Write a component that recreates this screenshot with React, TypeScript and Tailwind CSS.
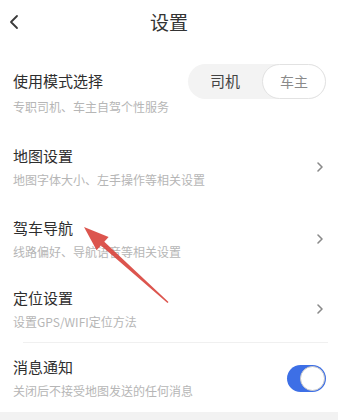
import React from 'react';

const font = { fontFamily: '"Noto Sans CJK SC", "Noto Sans", sans-serif' };

function Chevron() {
    return (
        <svg className="w-[8px] h-[12px] text-[#8a8a8a] mr-[2px]" viewBox="0 0 8 12" fill="none" stroke="currentColor">
            <path d="M2 2l4 4-4 4" strokeWidth={1.6} strokeLinecap="round" strokeLinejoin="round" />
        </svg>
    );
}

interface RowProps {
    title: string;
    desc: string;
    height: string;
    gap?: string;
    right?: React.ReactNode;
}

function Row({ title, desc, height, gap = 'gap-[6px]', right }: RowProps) {
    return (
        <div className={`flex items-center justify-between pl-[13px] pr-[12px] ${height}`}>
            <div className={`flex flex-col ${gap}`}>
                <div className="text-[15px] leading-[20px] text-[#2e2e2e]">{title}</div>
                <div className="text-[12px] leading-[16px] text-[#b6b6b6]">{desc}</div>
            </div>
            {right}
        </div>
    );
}

export default function App() {
    return (
        <div className="relative w-[338px] h-[420px] bg-white overflow-hidden" style={font}>
            {/* Header */}
            <div className="relative h-[44px] flex items-center justify-center">
                <svg className="absolute left-[8px] top-[14px] w-[12px] h-[16px] text-[#3a3a3a]" viewBox="0 0 12 16" fill="none" stroke="currentColor">
                    <path d="M9 2L3 8l6 6" strokeWidth={1.8} strokeLinecap="round" strokeLinejoin="round" />
                </svg>
                <div className="text-[19px] text-[#333]">设置</div>
            </div>

            <div className="mt-[11px]">
                <Row
                    title="使用模式选择"
                    desc="专职司机、车主自驾个性服务"
                    height="h-[75px]"
                    gap="gap-[8px]"
                    right={
                        <div className="flex items-center h-[35px] w-[138px] rounded-full bg-[#f3f3f3] -mt-[22px]">
                            <div className="flex-1 text-center text-[15px] text-[#444]">司机</div>
                            <div className="w-[64px] h-[35px] rounded-full bg-white border border-[#e2e2e2] flex items-center justify-center text-[14px] text-[#8a8a8a]">
                                车主
                            </div>
                        </div>
                    }
                />
                <Row title="地图设置" desc="地图字体大小、左手操作等相关设置" height="h-[73px]" right={<Chevron />} />
                <Row title="驾车导航" desc="线路偏好、导航语音等相关设置" height="h-[72px]" right={<Chevron />} />
                <Row title="定位设置" desc="设置GPS/WIFI定位方法" height="h-[67px]" right={<Chevron />} />
                <div className="ml-[23px] mr-[10px] h-px bg-[#f0f0f0]" />
                <Row
                    title="消息通知"
                    desc="关闭后不接受地图发送的任何消息"
                    height="h-[70px]"
                    right={
                        <div className="relative w-[39px] h-[27px] rounded-full bg-[#3d6fe6]">
                            <div className="absolute right-[1px] top-[1px] w-[25px] h-[25px] rounded-full bg-white border border-[#c9c9c9]" />
                        </div>
                    }
                />
            </div>

            <div className="absolute left-0 bottom-0 w-full h-[8px] bg-[#f2f2f2]" />

            {/* annotation arrow */}
            <svg className="absolute left-0 top-0 w-[338px] h-[420px] pointer-events-none" viewBox="0 0 338 420">
                <polygon
                    points="84,227 108.6,236.9 104.3,241.7 168.5,302 167.5,303 100.9,245.5 96.6,250.3"
                    fill="#d9463f"
                    fillOpacity={0.92}
                />
            </svg>
        </div>
    );
}
